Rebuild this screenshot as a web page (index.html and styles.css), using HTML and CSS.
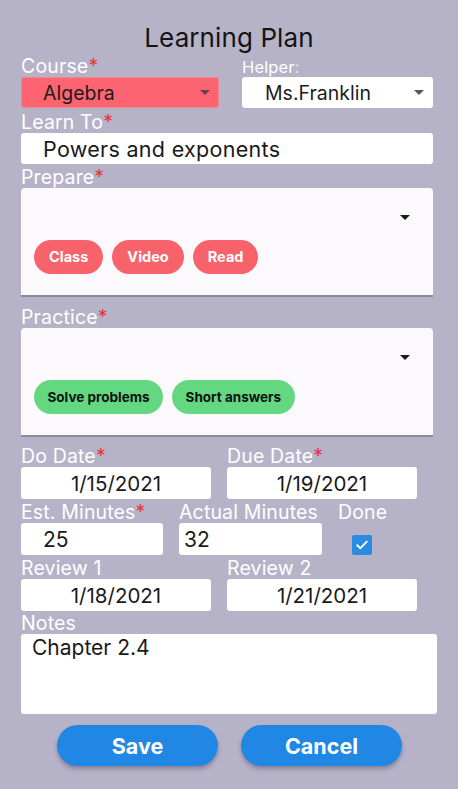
FILE: index.html
```html
<!DOCTYPE html>
<html>
<head>
<meta charset="utf-8">
<link rel="stylesheet" href="styles.css">
</head>
<body>
<div class="page">
  <h1 class="title">Learning Plan</h1>

  <div class="row row-top">
    <div class="field">
      <div class="label">Course<span class="req">*</span></div>
      <div class="select select-red">
        <span class="select-text">Algebra</span>
        <span class="caret caret-grey"></span>
      </div>
    </div>
    <div class="field">
      <div class="label label-small">Helper<span class="colon">:</span></div>
      <div class="select select-white">
        <span class="select-text">Ms.Franklin</span>
        <span class="caret caret-dark"></span>
      </div>
    </div>
  </div>

  <div class="field gap-3">
    <div class="label">Learn To<span class="req">*</span></div>
    <div class="input input-wide"><span class="input-text">Powers and exponents</span></div>
  </div>

  <div class="field gap-2">
    <div class="label">Prepare<span class="req">*</span></div>
    <div class="multi">
      <div class="multi-caret-row"><span class="caret caret-black"></span></div>
      <div class="chips">
        <span class="chip chip-red">Class</span>
        <span class="chip chip-red">Video</span>
        <span class="chip chip-red">Read</span>
      </div>
    </div>
  </div>

  <div class="field gap-9">
    <div class="label">Practice<span class="req">*</span></div>
    <div class="multi">
      <div class="multi-caret-row"><span class="caret caret-black"></span></div>
      <div class="chips">
        <span class="chip chip-green">Solve problems</span>
        <span class="chip chip-green">Short answers</span>
      </div>
    </div>
  </div>

  <div class="row row-dates gap-8">
    <div class="field">
      <div class="label">Do Date<span class="req">*</span></div>
      <div class="input input-center"><span class="date-text">1/15/2021</span></div>
    </div>
    <div class="field">
      <div class="label">Due Date<span class="req">*</span></div>
      <div class="input input-center"><span class="date-text">1/19/2021</span></div>
    </div>
  </div>

  <div class="row row-minutes gap-2">
    <div class="field">
      <div class="label">Est. Minutes<span class="req">*</span></div>
      <div class="input input-num"><span class="num-text">25</span></div>
    </div>
    <div class="field">
      <div class="label">Actual Minutes</div>
      <div class="input input-num tight"><span class="num-text">32</span></div>
    </div>
    <div class="field field-done">
      <div class="label">Done</div>
      <div class="check-wrap">
        <span class="checkbox">
          <svg width="14" height="14" viewBox="0 0 14 14"><path d="M2.2 7.2 L5.4 10.2 L11.8 3.6" fill="none" stroke="#fff" stroke-width="1.9" stroke-linecap="round" stroke-linejoin="round"/></svg>
        </span>
      </div>
    </div>
  </div>

  <div class="row row-dates gap-2">
    <div class="field">
      <div class="label">Review 1</div>
      <div class="input input-center"><span class="date-text">1/18/2021</span></div>
    </div>
    <div class="field">
      <div class="label">Review 2</div>
      <div class="input input-center"><span class="date-text">1/21/2021</span></div>
    </div>
  </div>

  <div class="field gap-1">
    <div class="label">Notes</div>
    <div class="notes">Chapter 2.4</div>
  </div>

  <div class="buttons">
    <button class="btn">Save</button>
    <button class="btn">Cancel</button>
  </div>
</div>
</body>
</html>
```
FILE: styles.css
```css
* { box-sizing: border-box; }
html, body {
  margin: 0;
  padding: 0;
  background: #b6b3c9;
  width: 458px;
  height: 789px;
  overflow: hidden;
}
body {
  font-family: Inter, "Noto Sans", "Liberation Sans", sans-serif;
  color: #1a1a1a;
}
.page {
  padding: 21px 0 0 21px;
  width: 458px;
}
.title {
  margin: 0;
  width: 416px;
  text-align: center;
  font-size: 26px;
  font-weight: 400;
  line-height: 34px;
  color: #141414;
  letter-spacing: 0.1px;
}
.row { display: flex; }
.row-top { gap: 23px; }
.row-top .field:first-child { width: 198px; }
.row-top .field:last-child { width: 191px; }
.row-dates { gap: 16px; }
.row-dates .field { width: 190px; }
.row-minutes { gap: 16px; }
.row-minutes .field:nth-child(1) { width: 142px; }
.row-minutes .field:nth-child(2) { width: 143px; }

.gap-1 { margin-top: 1px; }
.gap-2 { margin-top: 2px; }
.gap-3 { margin-top: 3px; }
.gap-8 { margin-top: 8px; }
.gap-9 { margin-top: 9px; }

.label {
  height: 22px;
  line-height: 22px;
  font-size: 19.5px;
  letter-spacing: 0.15px;
  color: #ffffff;
  white-space: nowrap;
}
.label-small { font-size: 16.5px; padding-top: 1px; }
.colon { opacity: 0.6; }
.req { color: #e8333d; }

.select {
  height: 31px;
  border-radius: 3px;
  display: flex;
  align-items: center;
  justify-content: space-between;
  font-size: 19.5px;
}
.select-red {
  background: #fb6470;
  border: 1px solid #f1858f;
  padding: 0 8px 0 21px;
}
.select-white {
  background: #ffffff;
  padding: 0 9px 0 23px;
}
.select-text { color: #1c1c1c; }
.caret {
  width: 0;
  height: 0;
  border-left: 5px solid transparent;
  border-right: 5px solid transparent;
}
.caret-grey { border-top: 5px solid #6b3f45; }
.caret-dark { border-top: 5px solid #555; }
.caret-black { border-top: 5px solid #1a1a1a; }

.input {
  height: 31px;
  background: #ffffff;
  border-radius: 3px;
  display: flex;
  align-items: center;
}
.input-wide {
  width: 412px;
  padding-left: 22px;
  font-size: 21.5px;
  letter-spacing: 0.3px;
}
.input-center {
  justify-content: center;
  height: 32px;
  font-size: 20.5px;
}
.input-num {
  height: 32px;
  padding-left: 22px;
  font-size: 21px;
}
.input-num.tight { padding-left: 5px; }

.multi {
  width: 412px;
  height: 109px;
  background: #fbf9fb;
  border-radius: 4px 4px 0 0;
  border-bottom: 2px solid #8e8b99;
  padding: 0 13px;
}
.multi-caret-row {
  height: 52px;
  display: flex;
  justify-content: flex-end;
  padding: 27px 10px 0 0;
}
.chips {
  display: flex;
  gap: 9px;
}
.chip {
  height: 34px;
  line-height: 34px;
  border-radius: 17px;
  padding: 0 15px;
  font-size: 14.5px;
  font-weight: 700;
}
.chip-red { background: #f8636b; color: #ffffff; }
.chip-green { background: #63d880; color: #111; font-size: 13.5px; padding: 0 13.5px; }

.field-done { width: 60px; }
.check-wrap {
  padding: 12px 0 0 14px;
}
.checkbox {
  display: flex;
  width: 20px;
  height: 20px;
  background: #2a8be2;
  border-radius: 2px;
  align-items: center;
  justify-content: center;
}

.notes {
  width: 416px;
  height: 80px;
  background: #ffffff;
  border-radius: 3px;
  padding: 1px 11px;
  font-size: 21px;
  line-height: 26px;
}

.buttons {
  display: flex;
  gap: 23px;
  margin-top: 11px;
  padding-left: 36px;
}
.btn {
  width: 161px;
  height: 41px;
  border: none;
  border-radius: 21px;
  background: #2088e4;
  color: #ffffff;
  font-family: Inter, "Noto Sans", sans-serif;
  font-size: 21.5px;
  font-weight: 700;
  box-shadow: 0 3px 4px rgba(40, 40, 70, 0.35);
  padding: 0;
}
```
